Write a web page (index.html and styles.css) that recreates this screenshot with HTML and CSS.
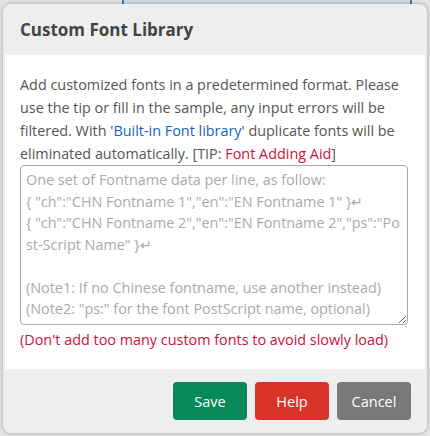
FILE: index.html
```html
<!DOCTYPE html>
<html lang="en">
<head>
<meta charset="utf-8">
<title>Custom Font Library</title>
<link rel="stylesheet" href="styles.css">
</head>
<body>
<div class="behind"></div>
<div class="dialog">
  <div class="dialog-header">Custom Font Library</div>
  <div class="dialog-body">
    <p class="intro">Add customized fonts in a predetermined format. Please use the tip or fill in the sample, any input errors will be filtered. With '<a class="link-blue">Built-in Font library</a>' duplicate fonts will be eliminated automatically. [TIP: <a class="link-red">Font Adding Aid</a>]</p>
    <textarea class="font-input" placeholder="One set of Fontname data per line, as follow:&#10;{ &quot;ch&quot;:&quot;CHN Fontname 1&quot;,&quot;en&quot;:&quot;EN Fontname 1&quot; }↵&#10;{ &quot;ch&quot;:&quot;CHN Fontname 2&quot;,&quot;en&quot;:&quot;EN Fontname 2&quot;,&quot;ps&quot;:&quot;Po&#10;st-Script Name&quot; }↵&#10;&#10;(Note1: If no Chinese fontname, use another instead)&#10;(Note2: &quot;ps:&quot; for the font PostScript name, optional)"></textarea>
    <p class="warn">(Don't add too many custom fonts to avoid slowly load)</p>
  </div>
  <div class="dialog-footer">
    <button class="btn btn-save">Save</button>
    <button class="btn btn-help">Help</button>
    <button class="btn btn-cancel">Cancel</button>
  </div>
</div>
</body>
</html>
```
FILE: styles.css
```css
html, body {
  margin: 0;
  height: 100%;
}
body {
  background: #e4e4e4;
  padding: 4px 3px 3px 3px;
  box-sizing: border-box;
  font-family: "Open Sans", "Noto Sans", sans-serif;
  position: relative;
}
.behind {
  position: absolute;
  left: 122px;
  top: 0;
  width: 286px;
  height: 12px;
  background: #d3dbe6;
  border-left: 2px solid #4a78b5;
  border-right: 2px solid #4a78b5;
}
.dialog {
  position: relative;
  background: #eeeeee;
  border-radius: 8px;
  box-shadow: 0 0 4px rgba(0, 0, 0, 0.3);
  padding: 0 2px;
  height: 429px;
  box-sizing: border-box;
  display: flex;
  flex-direction: column;
}
.dialog-header {
  flex-shrink: 0;
  height: 51px;
  display: flex;
  align-items: center;
  padding-left: 15px;
  font-size: 17px;
  font-weight: 700;
  color: #444;
}
.dialog-body {
  flex-shrink: 0;
  background: #fff;
  padding: 18px 17px 18px 15px;
}
.intro {
  margin: 0;
  font-size: 14.4px;
  line-height: 23px;
  color: #555;
}
.link-blue { color: #1565c0; }
.link-red { color: #d0103a; }
.font-input {
  display: block;
  width: 100%;
  box-sizing: border-box;
  height: 160px;
  margin: 0;
  padding: 3px 5px;
  border: 1px solid #a9a9a9;
  border-radius: 4px;
  font-family: inherit;
  font-size: 14.4px;
  line-height: 21.5px;
  color: #555;
  resize: vertical;
  word-break: break-all;
}
.font-input::placeholder {
  color: #aaa;
}
.warn {
  margin: 3px 0 0;
  font-size: 14.4px;
  line-height: 23px;
  color: #d0103a;
}
.dialog-footer {
  flex: 1;
  display: flex;
  justify-content: flex-end;
  align-items: flex-start;
  gap: 8px;
  padding: 13px 14px 0 0;
}
.btn {
  width: 74px;
  height: 38px;
  border: none;
  border-radius: 4px;
  color: #fff;
  font-family: inherit;
  font-size: 14.5px;
}
.btn-save { background: #08895a; }
.btn-help { background: #d9332a; }
.btn-cancel { background: #787878; }
```
